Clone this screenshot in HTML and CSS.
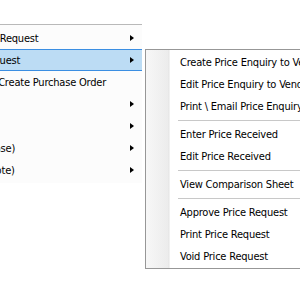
FILE: index.html
```html
<!DOCTYPE html>
<html lang="en">
<head>
    <meta charset="UTF-8">
    <title>Price Request Menu</title>
    <link rel="stylesheet" href="styles.css">
</head>
<body>
    <div class="screen">
        <div class="menu main-menu">
            <div class="item"><span class="label">Raise Price Request</span><span class="arrow"></span></div>
            <div class="item active"><span class="label">Vendor Request</span><span class="arrow"></span></div>
            <div class="item"><span class="label">Approve &amp; Create Purchase Order</span></div>
            <div class="item"><span class="label">Reports</span><span class="arrow"></span></div>
            <div class="item"><span class="label">Settings</span><span class="arrow"></span></div>
            <div class="item"><span class="label">List (Purchase)</span><span class="arrow"></span></div>
            <div class="item"><span class="label">Status (Quote)</span><span class="arrow"></span></div>
        </div>
        <div class="menu sub-menu">
            <div class="item">Create Price Enquiry to Vendor</div>
            <div class="item">Edit Price Enquiry to Vendor</div>
            <div class="item">Print \ Email Price Enquiry to Vendor</div>
            <div class="sep"></div>
            <div class="item">Enter Price Received</div>
            <div class="item">Edit Price Received</div>
            <div class="sep"></div>
            <div class="item">View Comparison Sheet</div>
            <div class="sep"></div>
            <div class="item">Approve Price Request</div>
            <div class="item">Print Price Request</div>
            <div class="item">Void Price Request</div>
        </div>
    </div>
</body>
</html>
```

FILE: styles.css
```css
* {
    margin: 0;
    padding: 0;
    box-sizing: border-box;
}

body {
    background: #fff;
    overflow: hidden;
    font-family: "DejaVu Sans Condensed", "DejaVu Sans", sans-serif;
    font-size: 11px;
    letter-spacing: -0.2px;
    color: #000;
}

.screen {
    display: flex;
    align-items: flex-start;
    width: 300px;
    height: 289px;
    overflow: hidden;
}

.menu {
    flex-shrink: 0;
}

.menu .item {
    height: 22px;
    display: flex;
    align-items: center;
    white-space: nowrap;
}

/* parent menu, cut off by the left edge */
.main-menu {
    width: 212px;
    margin-top: 24px;
    margin-left: -70px;
    padding: 2px 0;
    border-top: 1px solid #b9b9b9;
    background: #fcfcfc;
}

.main-menu .item {
    justify-content: space-between;
    padding: 0 8px 0 15px;
}

.main-menu .item.active {
    background: #bcdcf4;
    border-top: 1px solid #3b8ee2;
    border-bottom: 1px solid #3b8ee2;
}

.arrow {
    width: 0;
    height: 0;
    border-left: 4px solid #000;
    border-top: 3.5px solid transparent;
    border-bottom: 3.5px solid transparent;
}

/* submenu */
.sub-menu {
    width: 260px;
    margin-top: 49px;
    margin-left: 3px;
    padding: 1px;
    border: 1px solid #979797;
    background: linear-gradient(to right, #f7f7f7 0, #ececec 22px, #e3e3e3 23px, #fff 24px);
}

.sub-menu .item {
    padding-left: 33px;
}

.sep {
    height: 1px;
    margin: 3px 0 2px 31px;
    background: #c8c8c8;
}
```
